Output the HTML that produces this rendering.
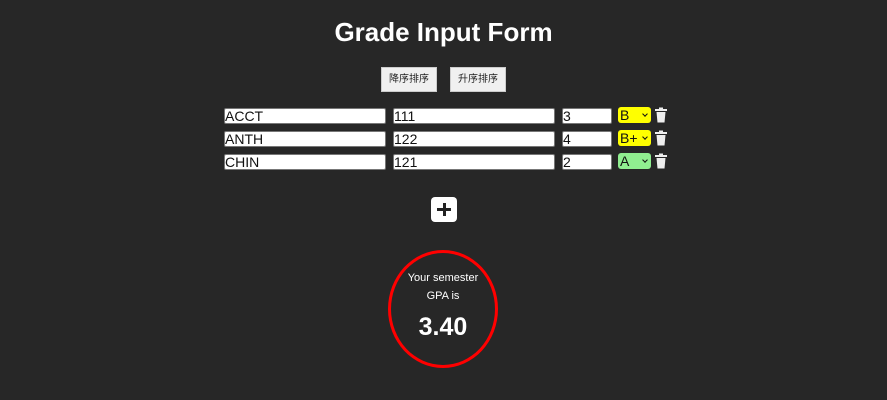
<!DOCTYPE html>
<html><head><style>
body{margin:0;width:887px;height:400px;background:#272727;font-family:"Liberation Sans",sans-serif;position:relative;overflow:hidden}
.a{position:absolute}
h1{position:absolute;left:0;width:887px;top:17px;margin:0;text-align:center;color:#fff;font-size:26px;font-weight:bold;font-family:"Liberation Sans",sans-serif}
.btn{position:absolute;top:67px;height:25px;background:#f0f0f0;border:1px solid #ccc;box-sizing:border-box;font-size:10px;color:#222;text-align:center;line-height:23px;white-space:nowrap;font-family:"Liberation Sans","Noto Sans CJK SC",sans-serif}
.in{position:absolute;height:16px;background:#fff;border:1px solid #777;border-radius:2px;box-sizing:border-box;font-size:14px;line-height:14px;color:#111;padding-left:0}
.sel{position:absolute;height:16px;width:33px;left:618px;border-radius:3px;box-sizing:border-box;font-size:14px;line-height:16px;padding-left:2px;color:#111}
.sel:after{content:"";position:absolute;right:4px;top:5px;width:3px;height:3px;border-right:1.5px solid #111;border-bottom:1.5px solid #111;transform:rotate(45deg)}
.t{position:absolute;left:655px;width:12px;height:16px}
.g{position:absolute;left:388px;width:110px;text-align:center;color:#fff;font-family:"Liberation Sans",sans-serif}
</style></head><body>
<h1>Grade Input Form</h1>
<div class="btn" style="left:381px;width:56px">降序排序</div>
<div class="btn" style="left:450px;width:56px">升序排序</div>

<div class="in" style="left:224px;top:108px;width:162px">ACCT</div>
<div class="in" style="left:393px;top:108px;width:162px">111</div>
<div class="in" style="left:562px;top:108px;width:50px">3</div>
<div class="sel" style="top:107px;background:#ffff00">B</div>

<div class="in" style="left:224px;top:131px;width:162px">ANTH</div>
<div class="in" style="left:393px;top:131px;width:162px">122</div>
<div class="in" style="left:562px;top:131px;width:50px">4</div>
<div class="sel" style="top:130px;background:#ffff00">B+</div>

<div class="in" style="left:224px;top:154px;width:162px">CHIN</div>
<div class="in" style="left:393px;top:154px;width:162px">121</div>
<div class="in" style="left:562px;top:154px;width:50px">2</div>
<div class="sel" style="top:153px;background:#90ee90">A</div>

<svg class="t" style="top:107px" viewBox="0 0 12 16"><rect x="0" y="2" width="12" height="2" fill="#eee"/><rect x="4" y="0.5" width="4" height="2" fill="#eee"/><path d="M1.5 5h9l-1 10.5h-7z" fill="#eee"/></svg>
<svg class="t" style="top:130px" viewBox="0 0 12 16"><rect x="0" y="2" width="12" height="2" fill="#eee"/><rect x="4" y="0.5" width="4" height="2" fill="#eee"/><path d="M1.5 5h9l-1 10.5h-7z" fill="#eee"/></svg>
<svg class="t" style="top:153px" viewBox="0 0 12 16"><rect x="0" y="2" width="12" height="2" fill="#eee"/><rect x="4" y="0.5" width="4" height="2" fill="#eee"/><path d="M1.5 5h9l-1 10.5h-7z" fill="#eee"/></svg>

<div class="a" style="left:431px;top:197px;width:26px;height:25px;background:#fff;border-radius:4px"></div>
<div class="a" style="left:437px;top:208px;width:14px;height:3px;background:#222"></div>
<div class="a" style="left:442.5px;top:203px;width:3px;height:13px;background:#222"></div>

<div class="a" style="left:388px;top:250px;width:110px;height:118px;border:3px solid #f00;border-radius:50%;box-sizing:border-box"></div>
<div class="g" style="top:272px;font-size:11px">Your semester</div>
<div class="g" style="top:290px;font-size:11px">GPA is</div>
<div class="g" style="top:313px;font-size:25px;font-weight:bold">3.40</div>
</body></html>
